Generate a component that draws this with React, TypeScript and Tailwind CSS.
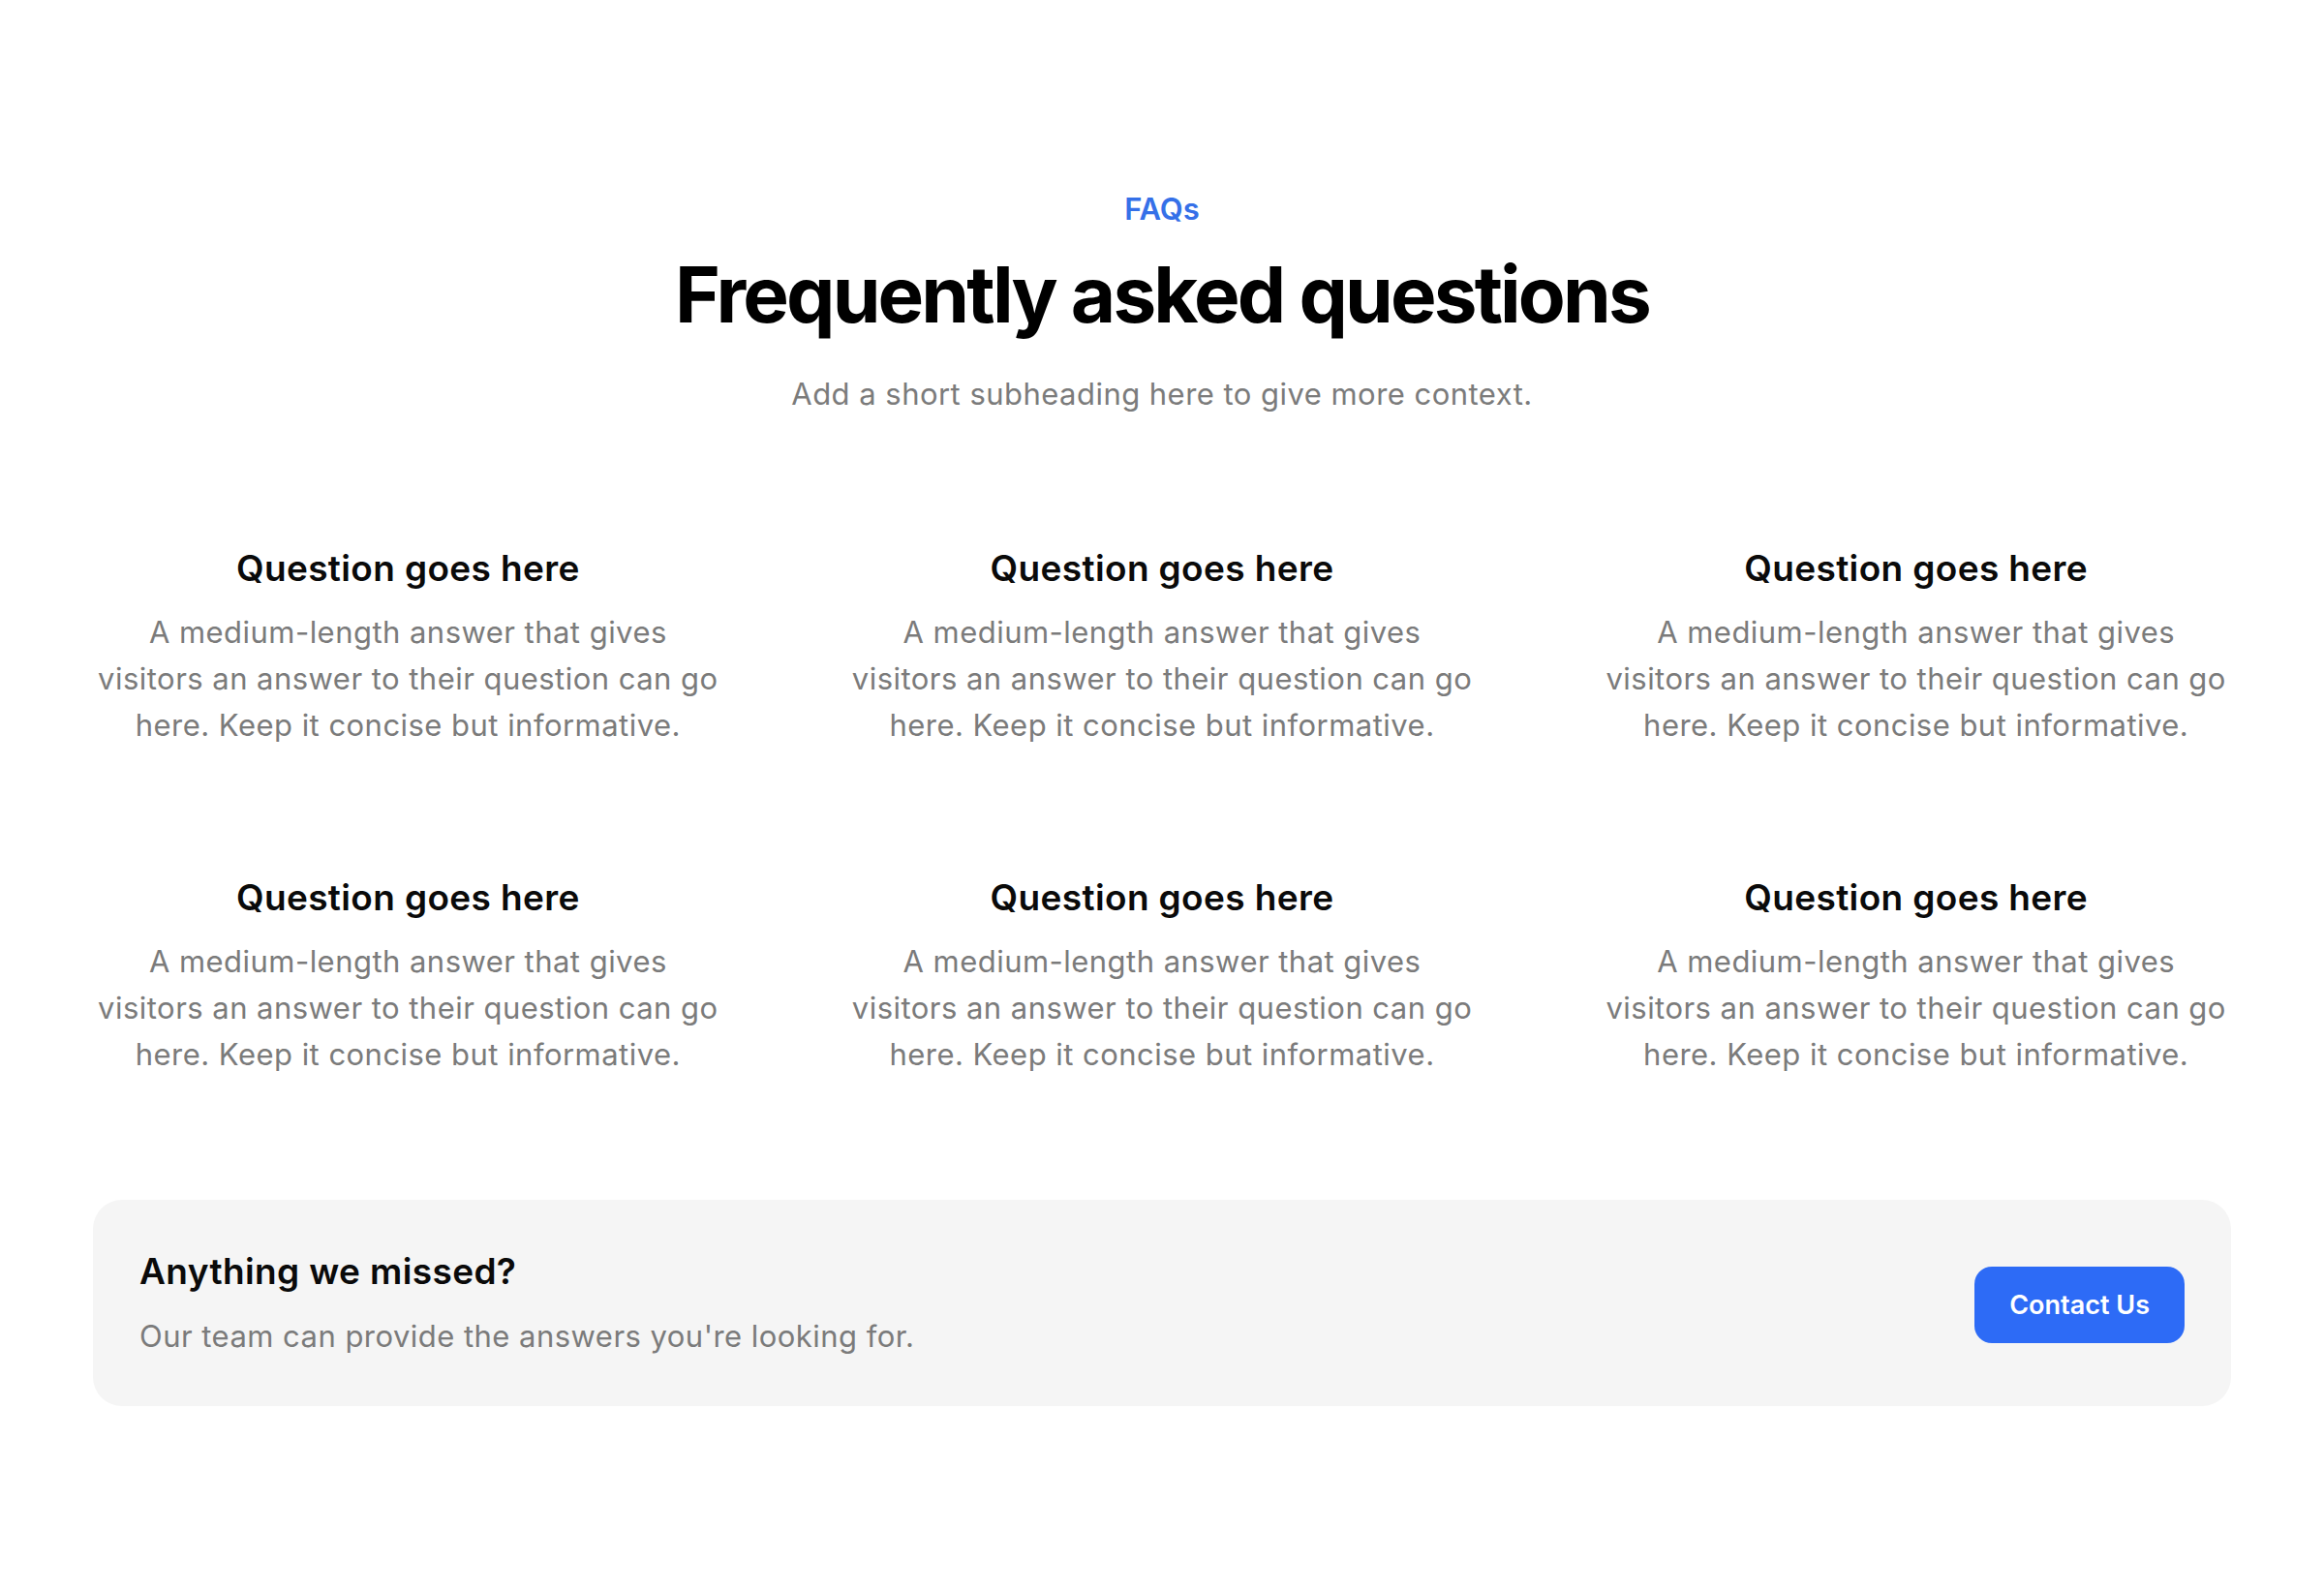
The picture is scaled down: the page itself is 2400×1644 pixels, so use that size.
import React from 'react';

const faqs = Array.from({ length: 6 }, () => ({
  question: 'Question goes here',
  answer:
    'A medium-length answer that gives visitors an answer to their question can go here. Keep it concise but informative.',
}));

const FaqItem: React.FC<{ question: string; answer: string }> = ({ question, answer }) => (
  <div className="flex flex-col items-center text-center">
    <h3 className="text-[37px] leading-[44px] font-semibold tracking-[0.01em] text-[#0a0a0a]">{question}</h3>
    <p className="mt-5 max-w-[644px] text-[31px] leading-[48px] tracking-[0.015em] text-[#7b7b7b]">{answer}</p>
  </div>
);

export default function App() {
  return (
    <div className="min-h-screen bg-white" style={{ fontFamily: 'Inter, "Noto Sans", sans-serif' }}>
      <section className="px-24 pt-[198px] pb-48">
        <div className="flex flex-col items-center text-center">
          <span className="text-[31px] leading-[36px] font-semibold text-[#3570e8]">FAQs</span>
          <h2 className="mt-[26px] text-[80px] leading-[88px] font-bold tracking-[-0.036em] text-black">
            Frequently asked questions
          </h2>
          <p className="mt-[35px] text-[31px] leading-[48px] tracking-[0.015em] text-[#7b7b7b]">
            Add a short subheading here to give more context.
          </p>
        </div>

        <div className="mt-[134px] grid grid-cols-3 gap-x-32 gap-y-[132px]">
          {faqs.map((f, i) => (
            <FaqItem key={i} question={f.question} answer={f.answer} />
          ))}
        </div>

        <div className="mt-[126px] flex items-center justify-between rounded-[30px] bg-[#f5f5f5] px-12 pt-[51px] pb-12">
          <div>
            <h3 className="text-[37px] leading-[46px] font-semibold tracking-[0.01em] text-[#0a0a0a]">
              Anything we missed?
            </h3>
            <p className="mt-5 text-[31px] leading-[48px] tracking-[0.015em] text-[#7b7b7b]">
              Our team can provide the answers you're looking for.
            </p>
          </div>
          <button className="rounded-[18px] bg-[#2d6bf6] px-9 py-[19px] text-[27px] leading-[41px] font-semibold text-white">
            Contact Us
          </button>
        </div>
      </section>
    </div>
  );
}
